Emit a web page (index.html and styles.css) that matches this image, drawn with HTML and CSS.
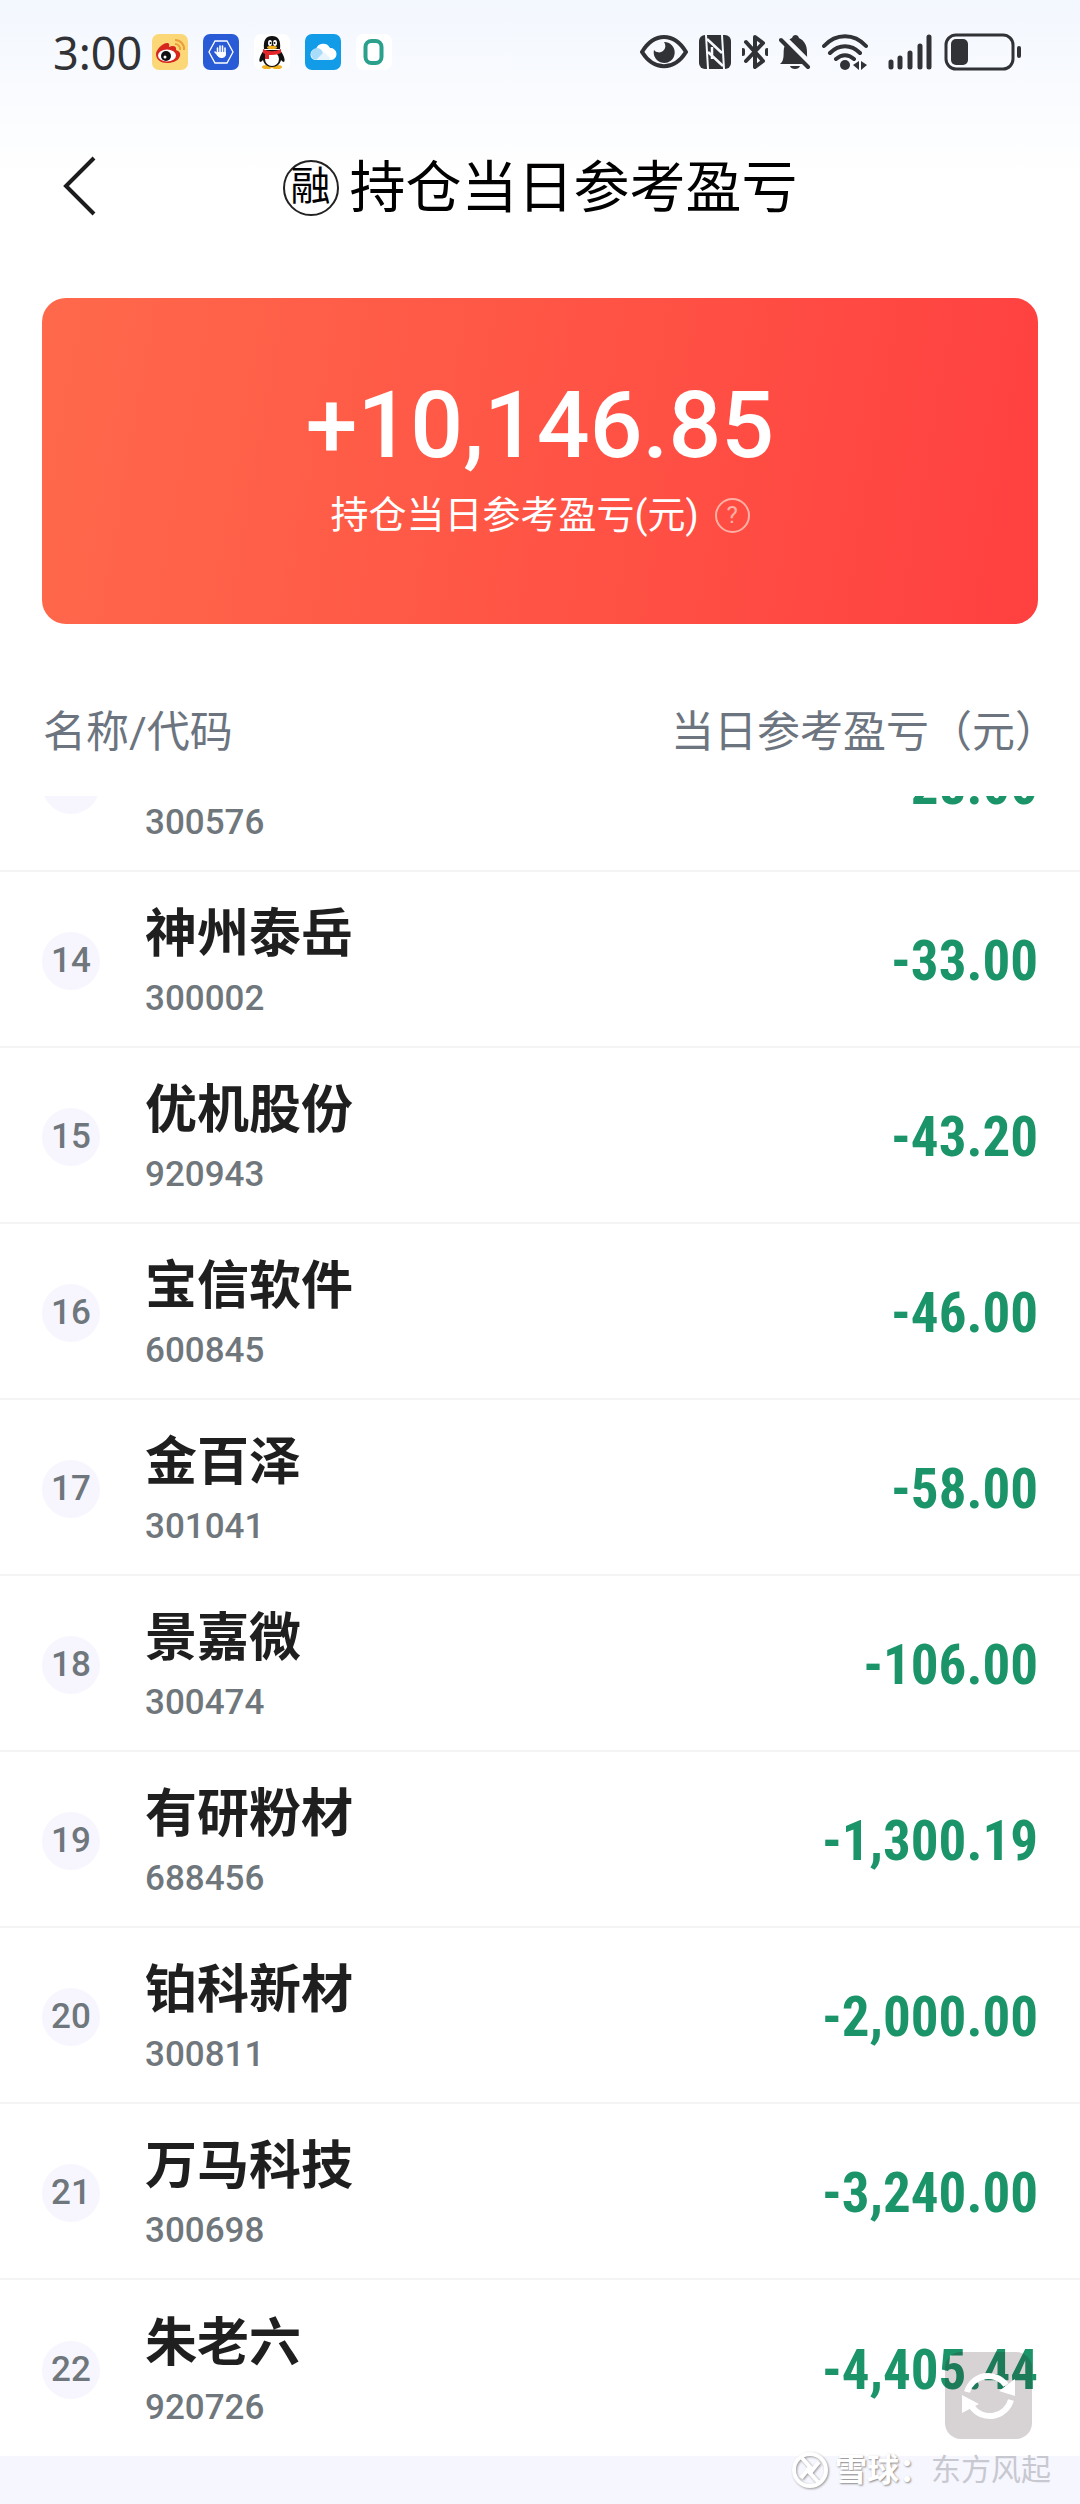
FILE: index.html
```html
<!DOCTYPE html>
<html lang="zh-CN">
<head>
    <meta charset="UTF-8">
    <meta name="viewport" content="width=device-width, initial-scale=1.0">
    <title>持仓当日参考盈亏</title>
    <link rel="stylesheet" href="styles.css">
</head>
<body>

<!-- Status bar -->
<div class="status-bar">
    <span class="time">3:00</span>
    <div class="apps">
        <svg viewBox="0 0 36 36">
            <rect width="36" height="36" rx="7" fill="#fbd777"/>
            <path d="M23 6a9 9 0 0 1 9 10M23 10a5 5 0 0 1 5 6" fill="none" stroke="#e9a03a" stroke-width="2"/>
            <path d="M4 20c0-5 8-12 12-11 2 1 1 3 1 4 4-2 8-1 7 3 3 1 5 3 4 6-2 6-9 7-13 7-6 0-11-3-11-9z" fill="#d7261e"/>
            <ellipse cx="15" cy="21.500" rx="9" ry="6" fill="#fff"/>
            <circle cx="14" cy="22" r="5" fill="#111"/>
            <circle cx="13" cy="23" r="1.500" fill="#fff"/>
        </svg>
        <svg viewBox="0 0 36 36">
            <rect width="36" height="36" rx="7" fill="#2a5bd7"/>
            <path d="M12 7h12l6 11-6 11H12L6 18z" fill="none" stroke="#fff" stroke-width="1.300"/>
            <path d="M14.500 14v7M17 12v8M19.500 12v8M22 14v7M12 18l4 4" stroke="#fff" stroke-width="1.600" stroke-linecap="round"/>
            <path d="M14 18h8.800v2c0 3-2 4-4.400 4s-3-1-4.400-3z" fill="#fff"/>
        </svg>
        <svg viewBox="0 0 36 36">
            <rect width="36" height="36" rx="7" fill="#fff"/>
            <ellipse cx="13" cy="33" rx="5" ry="2" fill="#f2b01e"/>
            <ellipse cx="23" cy="33" rx="5" ry="2" fill="#f2b01e"/>
            <path d="M10 16c-3 4-6 10-4 12 1 0 2-1 3-2 1 4 4 7 9 7s8-3 9-7c1 1 2 2 3 2 2-2-1-8-4-12z" fill="#111"/>
            <ellipse cx="18" cy="25" rx="7" ry="7" fill="#fff"/>
            <path d="M10 15C9 6 12 2 18 2s9 4 8 13z" fill="#111"/>
            <ellipse cx="16" cy="9" rx="2" ry="3" fill="#fff"/>
            <ellipse cx="21" cy="9" rx="2" ry="3" fill="#fff"/>
            <circle cx="16.500" cy="9" r="1" fill="#111"/>
            <circle cx="20.500" cy="9" r="1" fill="#111"/>
            <ellipse cx="18" cy="13.500" rx="5" ry="1.700" fill="#f2b01e"/>
            <path d="M9 15c6 3 12 3 18 0v4c-4 2-9 2-12 2v4h-4v-5l-2-1z" fill="#e4252b"/>
        </svg>
        <svg viewBox="0 0 36 36">
            <rect width="36" height="36" rx="7" fill="#129ce8"/>
            <path d="M11 26a5.500 5.500 0 0 1 0-11 7.500 7.500 0 0 1 14-1 6 6 0 0 1 1 12z" fill="#fff"/>
            <circle cx="12" cy="20" r="6" fill="#a9dcf8"/>
            <path d="M11 26l8-8 8 8z" fill="#e6f5fd"/>
        </svg>
        <svg viewBox="0 0 36 36">
            <rect width="36" height="36" rx="7" fill="#fff"/>
            <rect x="9.500" y="7" width="16" height="22" rx="6" fill="none" stroke="#2ba08c" stroke-width="4"/>
        </svg>
    </div>
    <div class="signals">
        <svg class="eye" viewBox="0 0 48 36">
            <path d="M2 18C14-2 34-2 46 18 34 37 14 37 2 18z" fill="none" stroke="#303236" stroke-width="4"/>
            <path d="M24 8a10.500 10.500 0 1 1-10 8 6 6 0 0 0 10-8z" fill="#303236"/>
        </svg>
        <svg class="nfc" viewBox="0 0 32 36">
            <rect y="1" width="32" height="34" rx="6" fill="#303236"/>
            <path d="M7 1l2 34M25 35L23 1" fill="none" stroke="#f6f9fe" stroke-width="2"/>
            <path d="M8 5l15 14M9 18l15 14M13 13v12" fill="none" stroke="#f6f9fe" stroke-width="2.500"/>
        </svg>
        <svg class="bluetooth" viewBox="0 0 26 36">
            <path d="M4 8l17 19-8 6V3l8 6L4 27M1 16v4M25 16v4" fill="none" stroke="#303236" stroke-width="4" stroke-linejoin="round" stroke-linecap="round"/>
        </svg>
        <svg class="bell" viewBox="0 0 32 36">
            <path d="M1 30c5-4 3-10 4-16C7 8 10 5 13 4c1-4 6-4 7 0 6 3 8 8 8 14 0 5 0 9 3 12zM11 32h10c-1 4-9 4-10 0z" fill="#303236"/>
            <path d="M4 3l28 28" stroke="#f6f9fe" stroke-width="6"/>
            <path d="M2 6l27 27" stroke="#303236" stroke-width="4" stroke-linecap="round"/>
        </svg>
        <svg class="wifi" viewBox="0 0 46 36">
            <path d="M2 12C14-1 32-1 44 12M8 19c9-9 21-9 30 0M14 25c6-5 12-5 18 0" fill="none" stroke="#303236" stroke-width="4" stroke-linecap="round"/>
            <circle cx="23" cy="31" r="5" fill="#303236"/>
            <path d="M37 27v9l-6-5zM39 27v9l6-5z" fill="#303236"/>
        </svg>
        <svg class="cell" viewBox="0 0 46 36">
            <path d="M4 28v5M13 24v9M23 19v14M33 12v21M42 3v30" stroke="#303236" stroke-width="5" stroke-linecap="round"/>
        </svg>
        <svg class="battery" viewBox="0 0 78 38">
            <rect x="2" y="2" width="67" height="34" rx="10" fill="none" stroke="#303236" stroke-width="3"/>
            <rect x="7" y="6" width="17" height="26" rx="5" fill="#303236"/>
            <path d="M75 15v8" stroke="#303236" stroke-width="4" stroke-linecap="round"/>
        </svg>
    </div>
</div>

<header class="header">
    <button class="back" aria-label="返回">
        <svg viewBox="0 0 34 60"><path d="M31 2L3 30l28 28" fill="none" stroke="#1c1c1e" stroke-width="4"/></svg>
    </button>
    <h1><span class="badge">融</span>持仓当日参考盈亏</h1>
</header>

<main>
    <section class="summary">
        <div class="total">+10,146.85</div>
        <div class="caption">持仓当日参考盈亏(元) <button class="help" aria-label="说明">?</button></div>
    </section>

    <table class="holdings">
        <thead>
            <tr><th>名称/代码</th><th>当日参考盈亏（元）</th></tr>
        </thead>
        <tbody>
            <tr><td class="rank"><span>13</span></td><td class="stock"><b>容大感光</b><i>300576</i></td><td class="amount">-28.00</td></tr>
            <tr><td class="rank"><span>14</span></td><td class="stock"><b>神州泰岳</b><i>300002</i></td><td class="amount">-33.00</td></tr>
            <tr><td class="rank"><span>15</span></td><td class="stock"><b>优机股份</b><i>920943</i></td><td class="amount">-43.20</td></tr>
            <tr><td class="rank"><span>16</span></td><td class="stock"><b>宝信软件</b><i>600845</i></td><td class="amount">-46.00</td></tr>
            <tr><td class="rank"><span>17</span></td><td class="stock"><b>金百泽</b><i>301041</i></td><td class="amount">-58.00</td></tr>
            <tr><td class="rank"><span>18</span></td><td class="stock"><b>景嘉微</b><i>300474</i></td><td class="amount">-106.00</td></tr>
            <tr><td class="rank"><span>19</span></td><td class="stock"><b>有研粉材</b><i>688456</i></td><td class="amount">-1,300.19</td></tr>
            <tr><td class="rank"><span>20</span></td><td class="stock"><b>铂科新材</b><i>300811</i></td><td class="amount">-2,000.00</td></tr>
            <tr><td class="rank"><span>21</span></td><td class="stock"><b>万马科技</b><i>300698</i></td><td class="amount">-3,240.00</td></tr>
            <tr><td class="rank"><span>22</span></td><td class="stock"><b>朱老六</b><i>920726</i></td><td class="amount">-4,405.44</td></tr>
        </tbody>
    </table>
</main>

<button class="refresh" aria-label="刷新">
    <svg viewBox="0 0 56 56">
        <path d="M6 24A22 22 0 0 1 45 17M50 32a22 22 0 0 1-39 7" fill="none" stroke="#fff" stroke-width="6"/>
        <path d="M54 11v17l-16-5zM1 45V27l17 9z" fill="#fff"/>
    </svg>
</button>

<div class="watermark">
    <svg viewBox="0 0 38 38">
        <circle cx="19" cy="19" r="16" fill="none" stroke="#fff" stroke-width="4"/>
        <path d="M11 7l8 9-9 11M27 31l-8-9 9-11" fill="none" stroke="#fff" stroke-width="4"/>
    </svg>
    <span class="brand">雪球：</span><span class="author">东方风起</span>
</div>

</body>
</html>
```
FILE: styles.css
```css
* {
    box-sizing: border-box;
}
body {
    margin: 0;
    position: relative;
    font-family: Roboto, "Noto Sans CJK SC", sans-serif;
    background: linear-gradient(#f3f7fe, #fff 180px) no-repeat #fff;
    color: #1f1f1f;
}
button {
    padding: 0;
    border: none;
    background: none;
    font-family: inherit;
    cursor: pointer;
}
svg {
    display: block;
}

/* status bar */
.status-bar {
    display: flex;
    align-items: center;
    height: 104px;
    padding: 0 58px 0 53px;
}
.time {
    font-family: "Noto Sans", sans-serif;
    font-size: 45px;
    color: #303236;
}
.apps {
    display: flex;
    gap: 15px;
    margin-left: 10px;
}
.apps svg {
    width: 36px;
    height: 36px;
}
.signals {
    display: flex;
    align-items: center;
    gap: 11px;
    margin-left: auto;
}
.signals svg {
    height: 36px;
}
.eye {
    width: 48px;
}
.nfc, .bell {
    width: 32px;
}
.bluetooth {
    width: 26px;
}
.wifi, .cell {
    width: 46px;
}
.signals .cell {
    margin-left: 8px;
}
.signals .battery {
    width: 78px;
    height: 38px;
}

/* title */
.header {
    position: relative;
    height: 194px;
    padding-top: 42px;
}
.back {
    position: absolute;
    left: 63px;
    top: 52px;
}
.back svg {
    width: 34px;
    height: 60px;
}
h1 {
    display: flex;
    justify-content: center;
    align-items: center;
    gap: 11px;
    margin: 0;
    font-size: 56px;
    font-weight: 400;
    line-height: 84px;
    color: #000;
}
.badge {
    width: 56px;
    height: 56px;
    border: 2px solid #222;
    border-radius: 50%;
    font-size: 40px;
    line-height: 50px;
    text-align: center;
}

/* red card */
.summary {
    height: 326px;
    margin: 0 42px;
    padding-top: 70px;
    border-radius: 24px;
    background: linear-gradient(100deg, #ff694b, #ff4040);
    color: #fff;
    text-align: center;
}
.total {
    font-size: 93px;
    font-weight: 500;
    line-height: 116px;
}
.caption {
    display: flex;
    justify-content: center;
    align-items: center;
    gap: 16px;
    font-size: 38px;
    line-height: 62px;
}
.help {
    width: 35px;
    height: 35px;
    border: 2px solid #ffb0a4;
    border-radius: 50%;
    font-size: 24px;
    line-height: 30px;
    color: #ffb0a4;
}

/* holdings list */
.holdings, .holdings thead, .holdings tbody {
    display: block;
}
.holdings tr {
    display: flex;
    align-items: center;
    padding: 4px 42px 0;
}
.holdings thead tr {
    justify-content: space-between;
    padding: 76px 22px 32px 43px;
}
.holdings th {
    padding: 0;
    font-size: 43px;
    font-weight: 400;
    line-height: 64px;
    color: #6c757f;
}
.holdings tbody {
    overflow: hidden;
}
.holdings tbody tr {
    height: 176px;
    border-bottom: 2px solid #f4f4f5;
}
/* list is scrolled, row 13 is half under the header */
.holdings tbody tr:first-child {
    margin-top: -100px;
}
.holdings tbody tr:last-child {
    border-bottom: none;
}
.holdings td {
    padding: 0;
}
.rank {
    width: 103px;
}
.rank span {
    display: block;
    width: 58px;
    height: 58px;
    border-radius: 50%;
    background-color: #f7f6fe;
    font-size: 35px;
    font-weight: 500;
    line-height: 58px;
    text-align: center;
    color: #6f777c;
}
.stock b {
    display: block;
    font-size: 52px;
    line-height: 76px;
}
.stock i {
    display: block;
    font-size: 35px;
    font-style: normal;
    font-weight: 500;
    line-height: 52px;
    color: #6f777c;
}
.amount {
    margin-left: auto;
    font-family: "Roboto Condensed", "Liberation Sans Narrow", Roboto, sans-serif;
    font-size: 55px;
    font-weight: 700;
    color: #1a9468;
}

main::after {
    content: "";
    display: block;
    height: 48px;
    background-color: #f6f6fe;
}

/* floating things */
.refresh {
    position: absolute;
    right: 48px;
    bottom: 65px;
    display: flex;
    justify-content: center;
    align-items: center;
    width: 87px;
    height: 87px;
    border-radius: 16px;
    background-color: rgba(40, 15, 25, 0.19);
}
.refresh svg {
    width: 56px;
    height: 56px;
}
.watermark {
    position: absolute;
    right: 29px;
    bottom: 12px;
    display: flex;
    align-items: center;
    font-size: 30px;
    line-height: 44px;
}
.watermark svg {
    width: 38px;
    height: 38px;
    margin-right: 6px;
    filter: drop-shadow(1px 1px 1px #999);
}
.brand {
    font-size: 32px;
    font-weight: 700;
    color: #fff;
    text-shadow: 1px 1px 2px #888;
}
.author {
    color: #c8c8d0;
}
```
